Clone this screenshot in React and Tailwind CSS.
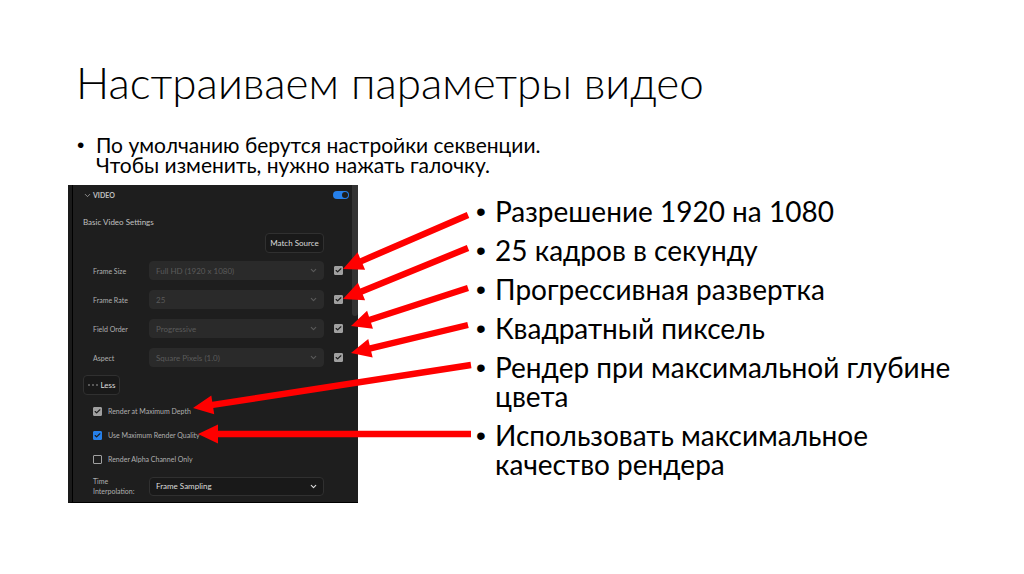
import React, { useState } from 'react';
import { Check, ChevronDown } from 'lucide-react';

const frameFields = [
    { id: 'frame-size', label: 'Frame Size', value: 'Full HD (1920 x 1080)' },
    { id: 'frame-rate', label: 'Frame Rate', value: '25' },
    { id: 'field-order', label: 'Field Order', value: 'Progressive' },
    { id: 'aspect', label: 'Aspect', value: 'Square Pixels (1.0)' },
];

const notes = [
    'Разрешение 1920 на 1080',
    '25 кадров в секунду',
    'Прогрессивная развертка',
    'Квадратный пиксель',
    'Рендер при максимальной глубине цвета',
    'Использовать максимальное качество рендера',
];

// from: the note, to: the tip over the panel
const arrows = [
    { from: [400, 30], to: [275, 84] },
    { from: [400, 63], to: [275, 114] },
    { from: [400, 103], to: [283, 141] },
    { from: [400, 140], to: [283, 168] },
    { from: [403, 180], to: [125, 223] },
    { from: [403, 249], to: [130, 249] },
];

const Arrow = ({ from, to }) => {
    const length = Math.hypot(from[0] - to[0], from[1] - to[1]);
    const angle = (Math.atan2(from[1] - to[1], from[0] - to[0]) * 180) / Math.PI;
    return (
        <path
            d={`M0 0 L20 -9.5 V-3.2 H${length} V3.2 H20 V9.5 Z`}
            transform={`translate(${to[0]} ${to[1]}) rotate(${angle})`}
            fill="#ff0000"
        />
    );
};

const Tick = ({ id, label, checked, onChange, accent }) => (
    <span className="relative flex size-[9px] shrink-0">
        <input
            id={id}
            type="checkbox"
            aria-label={label}
            checked={checked}
            onChange={onChange}
            className={`peer size-[9px] appearance-none rounded-[1px] border border-[#a0a0a0] ${accent ? 'checked:border-[#2680eb] checked:bg-[#2680eb]' : 'checked:bg-[#a0a0a0]'}`}
        />
        <Check strokeWidth={4} className="pointer-events-none absolute inset-px hidden size-[7px] text-[#1d1d1d] peer-checked:block" />
    </span>
);

const Dropdown = ({ id, value, muted }) => (
    <div className="relative w-[175px]">
        <select
            id={id}
            className={`block h-[19px] w-full appearance-none rounded-sm border px-[6px] text-[8px] leading-[16px] ${muted ? 'border-[#2a2a2a] bg-[#2a2a2a] text-[#5a5a5a]' : 'border-[#303030] bg-[#191919] text-[#dcdcdc]'}`}
        >
            <option>{value}</option>
        </select>
        <ChevronDown size={9} strokeWidth={3} className={`pointer-events-none absolute top-[5px] right-[6px] ${muted ? 'text-[#5a5a5a]' : 'text-[#dcdcdc]'}`} />
    </div>
);

const VideoPanel = () => {
    const [enabled, setEnabled] = useState(true);
    const [checks, setChecks] = useState({
        'frame-size': true,
        'frame-rate': true,
        'field-order': true,
        aspect: true,
        depth: true,
        quality: true,
        alpha: false,
    });

    const toggle = (key) => setChecks({ ...checks, [key]: !checks[key] });

    return (
        <div className="relative w-[290px] shrink-0 border-b border-l-4 border-black border-l-[#1a1a1a] bg-[#1e1e1e] pr-[9px] pb-[6px] pl-[11px] text-[7px] leading-[10px] text-[#b0b0b0]">
            <div className="absolute inset-y-0 left-0 w-px bg-black" />
            <div className="absolute top-0 right-0 h-[131px] w-[6px] rounded-b-sm bg-[#333333]" />

            <div className="flex h-5 items-center gap-px">
                <ChevronDown size={9} strokeWidth={2} />
                <h2 className="text-[7px] font-bold text-[#c0c0c0]">VIDEO</h2>
                <input
                    type="checkbox"
                    role="switch"
                    aria-label="Video"
                    checked={enabled}
                    onChange={() => setEnabled(!enabled)}
                    className="ml-auto flex h-2 w-4 appearance-none items-center justify-start rounded-full bg-[#2680eb] p-px before:size-[6px] before:rounded-full before:bg-[#1e1e1e] checked:justify-end"
                />
            </div>

            <h3 className="mt-3 text-[8px] text-[#c0c0c0]">Basic Video Settings</h3>
            <div className="mt-[6px] flex justify-end pr-[25px]">
                <button className="h-5 w-[59px] rounded-sm border border-[#303030] bg-[#191919] text-[8px] text-[#dcdcdc]">Match Source</button>
            </div>

            <div className="mt-2 flex flex-col gap-[10px] pl-[10px]">
                {frameFields.map((field) => (
                    <div key={field.id} className="flex items-center">
                        <label htmlFor={field.id} className="w-[56px]">{field.label}</label>
                        <Dropdown id={field.id} value={field.value} muted />
                        <span className="ml-[10px]">
                            <Tick
                                id={`${field.id}-match`}
                                label={`${field.label} match source`}
                                checked={checks[field.id]}
                                onChange={() => toggle(field.id)}
                            />
                        </span>
                    </div>
                ))}
            </div>

            <button className="mt-2 flex h-5 w-[37px] items-center justify-center gap-[3px] rounded-sm border border-[#303030] bg-[#191919] text-[8px] text-[#dcdcdc]">
                <svg width="10" height="2" viewBox="0 0 10 2" fill="#a8a8a8">
                    <circle cx="1" cy="1" r="0.8" />
                    <circle cx="5" cy="1" r="0.8" />
                    <circle cx="9" cy="1" r="0.8" />
                </svg>
                Less
            </button>

            <div className="mt-[11px] flex flex-col gap-[14px] pl-[10px]">
                <div className="flex h-[10px] items-center gap-[6px]">
                    <Tick id="depth" checked={checks.depth} onChange={() => toggle('depth')} />
                    <label htmlFor="depth">Render at Maximum Depth</label>
                </div>
                <div className="flex h-[10px] items-center gap-[6px]">
                    <Tick id="quality" checked={checks.quality} onChange={() => toggle('quality')} accent />
                    <label htmlFor="quality">Use Maximum Render Quality</label>
                </div>
                <div className="flex h-[10px] items-center gap-[6px]">
                    <Tick id="alpha" checked={checks.alpha} onChange={() => toggle('alpha')} />
                    <label htmlFor="alpha">Render Alpha Channel Only</label>
                </div>
            </div>

            <div className="mt-3 flex items-center pl-[10px]">
                <label htmlFor="interpolation" className="w-[56px]">Time<br />Interpolation:</label>
                <Dropdown id="interpolation" value="Frame Sampling" />
            </div>
        </div>
    );
};

const App = () => {
    return (
        <main className="min-h-screen bg-white pt-[52px] pr-[60px] pb-10 pl-[68px] font-['Lato',sans-serif] text-black">
            <h1 className="pl-2 text-[44px] leading-[60px] font-light">Настраиваем параметры видео</h1>

            <ul className="mt-[23px] pl-[9px] text-[21px] leading-[20px]">
                <li className="flex">
                    <span className="w-[19px] shrink-0 font-['Liberation_Sans',sans-serif]">•</span>
                    <p>
                        По умолчанию берутся настройки секвенции.
                        <br />
                        Чтобы изменить, нужно нажать галочку.
                    </p>
                </li>
            </ul>

            <section className="relative mt-[10px] flex items-start">
                <VideoPanel />
                <ul className="ml-[118px] flex flex-1 flex-col gap-[10px] pt-3 text-[28px] leading-[29px]">
                    {notes.map((note) => (
                        <li key={note} className="flex">
                            <span className="w-[19px] shrink-0 font-['Liberation_Sans',sans-serif]">•</span>
                            <p>{note}</p>
                        </li>
                    ))}
                </ul>
                <svg className="pointer-events-none absolute top-0 left-0" width="410" height="318" viewBox="0 0 410 318">
                    {arrows.map((arrow) => (
                        <Arrow key={arrow.to.join()} from={arrow.from} to={arrow.to} />
                    ))}
                </svg>
            </section>
        </main>
    );
};

export default App;
